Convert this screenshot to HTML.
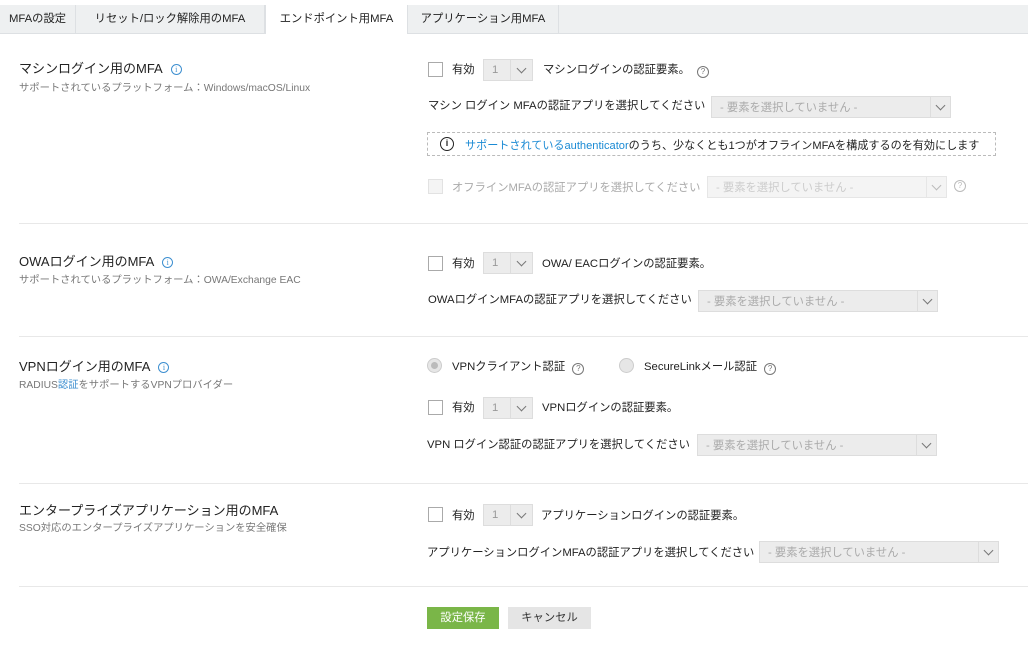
<!DOCTYPE html><html><head><meta charset="utf-8"><style>
*{box-sizing:border-box;margin:0;padding:0}
body{width:1028px;height:646px;background:#fff;font-family:"Liberation Sans","Noto Sans CJK JP",sans-serif;color:#222;position:relative;overflow:hidden;font-size:11.3px}
.a{position:absolute;white-space:nowrap}
.tabs{position:absolute;left:0;top:5px;width:1028px;height:29px;background:#eef0f1;border-bottom:1px solid #dde0e3}
.tab{position:absolute;top:0;height:29px;line-height:28px;font-size:11.3px;text-align:center;border-right:1px solid #dde0e3;color:#222}
.tab.act{background:#fff;height:29px;border-left:1px solid #dde0e3}
.t{font-size:13px;color:#222}
.s{font-size:10.3px;color:#777}
.info{display:inline-block;width:11px;height:11px;border:1px solid #3d8fd0;border-radius:50%;font-size:8px;line-height:9px;text-align:center;color:#3d8fd0;vertical-align:1px;margin-left:8px;font-family:"Liberation Serif",serif}
.q{display:inline-block;width:12px;height:12px;border:1px solid #777;border-radius:50%;font-size:8px;line-height:10px;text-align:center;color:#777;vertical-align:-1px}
.cb{position:absolute;width:15px;height:15px;border:1px solid #aaa;background:#fff}
.num{position:absolute;width:50px;height:22px;border:1px solid #ddd;background:#ececec}
.num span{position:absolute;left:8px;top:4px;color:#999}
.num i{position:absolute;left:26px;top:0;width:23px;height:20px;border-left:1px solid #ddd}
.chev{position:absolute;width:7px;height:7px;border-right:1.5px solid #777;border-bottom:1.5px solid #777;transform:rotate(45deg)}
.sel{position:absolute;width:240px;height:22px;border:1px solid #ddd;background:#ececec;color:#aaa;padding-left:8px;line-height:22px}
.sel i{position:absolute;right:0;top:0;width:20px;height:20px;border-left:1px solid #ddd}
.hr{position:absolute;left:19px;width:1009px;height:1px;background:#e8e8e8}
.radio{position:absolute;width:15px;height:15px;border-radius:50%;border:1px solid #ccc;background:#e6e6e6}
</style></head><body>
<div class="tabs">
<div class="tab" style="left:0;width:76px">MFAの設定</div>
<div class="tab" style="left:76px;width:189px">リセット/ロック解除用のMFA</div>
<div class="tab act" style="left:265px;width:143px">エンドポイント用MFA</div>
<div class="tab" style="left:408px;width:151px">アプリケーション用MFA</div>
</div>

<div class="a t" style="left:19px;top:58px">マシンログイン用のMFA<span class="info">i</span></div>
<div class="a s" style="left:19px;top:79px">サポートされているプラットフォーム：Windows/macOS/Linux</div>
<div class="cb" style="left:428px;top:62px"></div>
<div class="a" style="left:452px;top:61px">有効</div>
<div class="num" style="left:483px;top:59px"><span>1</span><i><b class="chev" style="left:7px;top:5px"></b></i></div>
<div class="a" style="left:543px;top:61px">マシンログインの認証要素。 <span class="q" style="margin-left:4px">?</span></div>
<div class="a" style="left:428px;top:97px">マシン ログイン MFAの認証アプリを選択してください</div>
<div class="sel" style="left:711px;top:96px">- 要素を選択していません -<i><b class="chev" style="left:6px;top:5px"></b></i></div>
<div class="a" style="left:427px;top:132px;width:569px;height:24px;border:1px dashed #bbb"></div>
<div class="a" style="left:440px;top:137px;width:14px;height:14px;border:1.5px solid #222;border-radius:50%;font-size:9px;text-align:center;line-height:11px;font-weight:bold">i</div>
<div class="a" style="left:465px;top:137px;font-size:11.1px"><span style="color:#1a8ad4">サポートされているauthenticator</span>のうち、少なくとも1つがオフラインMFAを構成するのを有効にします</div>
<div class="cb" style="left:428px;top:179px;border-color:#e2e2e2;background:#f4f4f4"></div>
<div class="a" style="left:452px;top:179px;color:#aaa">オフラインMFAの認証アプリを選択してください</div>
<div class="sel" style="left:707px;top:176px;background:#f4f4f4;border-color:#e6e6e6;color:#ccc">- 要素を選択していません -<i style="border-color:#e6e6e6"><b class="chev" style="left:6px;top:5px;border-color:#bbb"></b></i></div>
<div class="a q" style="left:954px;top:180px;border-color:#bbb;color:#bbb">?</div>
<div class="hr" style="top:223px"></div>

<div class="a t" style="left:19px;top:251px">OWAログイン用のMFA<span class="info">i</span></div>
<div class="a s" style="left:19px;top:271px">サポートされているプラットフォーム：OWA/Exchange EAC</div>
<div class="cb" style="left:428px;top:256px"></div>
<div class="a" style="left:452px;top:255px">有効</div>
<div class="num" style="left:483px;top:252px"><span>1</span><i><b class="chev" style="left:7px;top:5px"></b></i></div>
<div class="a" style="left:542px;top:255px">OWA/ EACログインの認証要素。</div>
<div class="a" style="left:428px;top:291px">OWAログインMFAの認証アプリを選択してください</div>
<div class="sel" style="left:698px;top:290px">- 要素を選択していません -<i><b class="chev" style="left:6px;top:5px"></b></i></div>
<div class="hr" style="top:336px"></div>

<div class="a t" style="left:19px;top:356px">VPNログイン用のMFA<span class="info">i</span></div>
<div class="a s" style="left:19px;top:376px">RADIUS<span style="color:#3d8fd0">認証</span>をサポートするVPNプロバイダー</div>
<div class="radio" style="left:427px;top:358px"><div style="position:absolute;left:3px;top:3px;width:7px;height:7px;border-radius:50%;background:#bbb"></div></div>
<div class="a" style="left:452px;top:358px">VPNクライアント認証 <span class="q" style="margin-left:4px">?</span></div>
<div class="radio" style="left:619px;top:358px"></div>
<div class="a" style="left:644px;top:358px">SecureLinkメール認証 <span class="q" style="margin-left:4px">?</span></div>
<div class="cb" style="left:428px;top:400px"></div>
<div class="a" style="left:452px;top:399px">有効</div>
<div class="num" style="left:483px;top:397px"><span>1</span><i><b class="chev" style="left:7px;top:5px"></b></i></div>
<div class="a" style="left:542px;top:399px">VPNログインの認証要素。</div>
<div class="a" style="left:427px;top:436px">VPN ログイン認証の認証アプリを選択してください</div>
<div class="sel" style="left:697px;top:434px">- 要素を選択していません -<i><b class="chev" style="left:6px;top:5px"></b></i></div>
<div class="hr" style="top:483px"></div>

<div class="a t" style="left:19px;top:500px">エンタープライズアプリケーション用のMFA</div>
<div class="a s" style="left:19px;top:519px">SSO対応のエンタープライズアプリケーションを安全確保</div>
<div class="cb" style="left:428px;top:507px"></div>
<div class="a" style="left:452px;top:507px">有効</div>
<div class="num" style="left:483px;top:504px"><span>1</span><i><b class="chev" style="left:7px;top:5px"></b></i></div>
<div class="a" style="left:541px;top:507px">アプリケーションログインの認証要素。</div>
<div class="a" style="left:427px;top:544px">アプリケーションログインMFAの認証アプリを選択してください</div>
<div class="sel" style="left:759px;top:541px">- 要素を選択していません -<i><b class="chev" style="left:6px;top:5px"></b></i></div>
<div class="hr" style="top:586px"></div>

<div class="a" style="left:427px;top:607px;width:72px;height:22px;background:#7ab648;color:#fff;text-align:center;line-height:22px">設定保存</div>
<div class="a" style="left:508px;top:607px;width:83px;height:22px;background:#e5e5e5;color:#333;text-align:center;line-height:22px">キャンセル</div>
</body></html>
